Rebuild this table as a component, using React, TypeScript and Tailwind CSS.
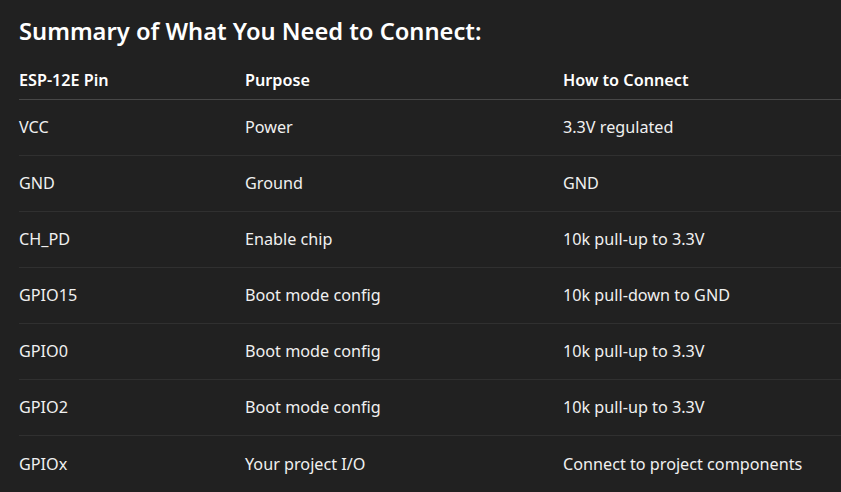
const rows = [
  ["VCC", "Power", "3.3V regulated"],
  ["GND", "Ground", "GND"],
  ["CH_PD", "Enable chip", "10k pull-up to 3.3V"],
  ["GPIO15", "Boot mode config", "10k pull-down to GND"],
  ["GPIO0", "Boot mode config", "10k pull-up to 3.3V"],
  ["GPIO2", "Boot mode config", "10k pull-up to 3.3V"],
  ["GPIOx", "Your project I/O", "Connect to project components"],
];

export default function App() {
  return (
    <div className="h-[492px] w-full overflow-hidden bg-[#212121] pl-[19px] font-['Noto_Sans',sans-serif] text-[#f0f0f0]">
      <h3 className="pt-[15px] text-[23.7px] font-semibold leading-8 text-white">
        Summary of What You Need to Connect:
      </h3>

      <div className="mt-[15px]">
        {/* Header */}
        <div className="grid h-[38px] grid-cols-[226px_318px_1fr] items-center border-b border-[#474747] text-[16.2px] font-semibold text-white">
          <div>ESP-12E Pin</div>
          <div>Purpose</div>
          <div>How to Connect</div>
        </div>

        {rows.map((r, i) => (
          <div
            key={r[0]}
            className={
              "grid h-[56px] grid-cols-[226px_318px_1fr] items-center text-[16.2px] " +
              (i < rows.length - 1 ? "border-b border-[#303030]" : "")
            }
          >
            <div>{r[0]}</div>
            <div>{r[1]}</div>
            <div className="whitespace-nowrap">{r[2]}</div>
          </div>
        ))}
      </div>
    </div>
  );
}
